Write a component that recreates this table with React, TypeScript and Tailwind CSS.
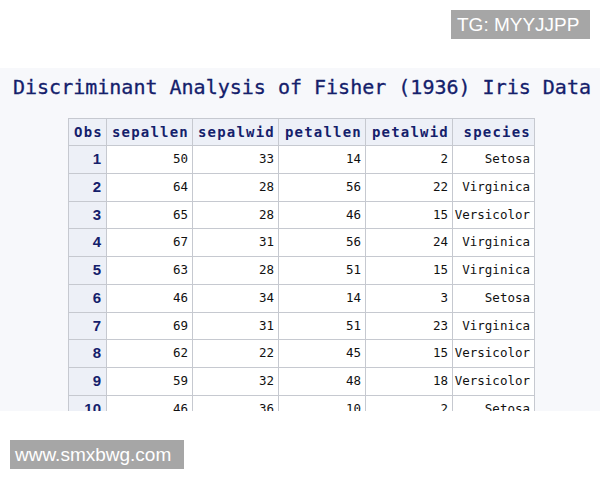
const rows: [number, number, number, number, number, string][] = [
  [1, 50, 33, 14, 2, "Setosa"],
  [2, 64, 28, 56, 22, "Virginica"],
  [3, 65, 28, 46, 15, "Versicolor"],
  [4, 67, 31, 56, 24, "Virginica"],
  [5, 63, 28, 51, 15, "Virginica"],
  [6, 46, 34, 14, 3, "Setosa"],
  [7, 69, 31, 51, 23, "Virginica"],
  [8, 62, 22, 45, 15, "Versicolor"],
  [9, 59, 32, 48, 18, "Versicolor"],
  [10, 46, 36, 10, 2, "Setosa"],
];

const headers = ["Obs", "sepallen", "sepalwid", "petallen", "petalwid", "species"];
const widths = ["w-[38px]", "w-[86px]", "w-[86px]", "w-[87px]", "w-[87px]", "w-[82px]"];

const mono = "font-['DejaVu_Sans_Mono',monospace]";

const App = () => {
  return (
    <div className="relative w-[600px] h-[480px] bg-white overflow-hidden font-['Liberation_Sans',Arial,sans-serif]">
      {/* Top white strip */}
      <div className="h-[68px]" />

      {/* Screenshot area */}
      <div className="h-[343px] bg-[#f7f8fb] overflow-hidden">
        <h1 className={`${mono} pl-[13px] pt-[7px] h-[31px] text-[20px] leading-[24px] text-[#14206b] whitespace-nowrap [-webkit-text-stroke:0.3px_#14206b]`}>
          Discriminant Analysis of Fisher (1936) Iris Data
        </h1>

        <table className="ml-[68px] mt-[19px] table-fixed border-collapse border border-[#c6c9d0] bg-white">
          <colgroup>
            {widths.map((w, i) => (
              <col key={i} className={w} />
            ))}
          </colgroup>
          <thead>
            <tr className="h-[27px] bg-[#edf0f7]">
              {headers.map((h) => (
                <th
                  key={h}
                  className={`${mono} border border-[#c6c9d0] px-0 pr-[3px] text-right text-[14px] tracking-[1.2px] font-bold text-[#14206b] whitespace-nowrap`}
                >
                  {h}
                </th>
              ))}
            </tr>
          </thead>
          <tbody>
            {rows.map((r) => (
              <tr key={r[0]} className="h-[27.75px]">
                <td className="border border-[#c6c9d0] bg-[#edf0f7] pr-[5px] text-right text-[15px] font-bold text-[#14206b]">
                  {r[0]}
                </td>
                {r.slice(1).map((v, i) => (
                  <td
                    key={i}
                    className={`${mono} border border-[#c6c9d0] pr-[4px] text-right text-[12.5px] text-[#111] whitespace-nowrap`}
                  >
                    {v}
                  </td>
                ))}
              </tr>
            ))}
          </tbody>
        </table>
      </div>

      {/* Watermark badges */}
      <div className="absolute left-[451px] top-[10px] w-[139px] h-[29px] bg-[#a6a6a6] pl-[6px] text-[19px] leading-[29px] text-white">
        TG: MYYJJPP
      </div>
      <div className="absolute left-[10px] top-[440px] w-[174px] h-[29px] bg-[#a6a6a6] pl-[5px] text-[19px] leading-[29px] text-white">
        www.smxbwg.com
      </div>
    </div>
  );
};

export default App;
